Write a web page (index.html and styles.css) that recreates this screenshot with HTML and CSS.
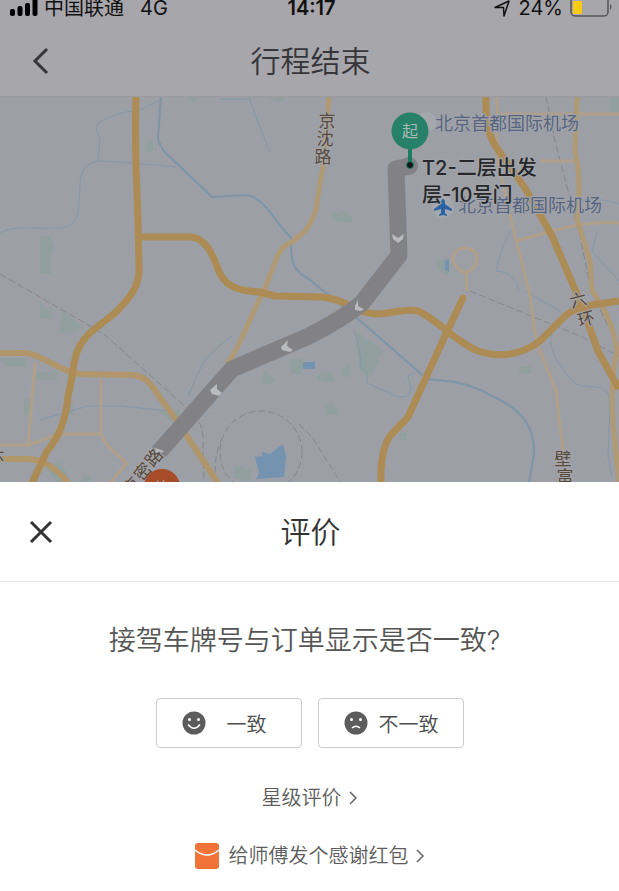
FILE: index.html
```html
<!DOCTYPE html>
<html lang="zh-CN">
<head>
    <meta charset="UTF-8">
    <meta name="viewport" content="width=device-width, initial-scale=1.0">
    <title>行程结束</title>
    <link rel="stylesheet" href="styles.css">
</head>
<body>
    <!-- 顶部 -->
    <header class="top">
        <div class="status">
            <div class="status-left">
                <svg class="signal" width="28" height="18" viewBox="0 0 28 18">
                    <rect x="0" y="10" width="5" height="7" rx="2" />
                    <rect x="7.500" y="7" width="5" height="10" rx="2" />
                    <rect x="15" y="4" width="5" height="13" rx="2" />
                    <rect x="22.500" y="-2" width="5" height="19" rx="2" />
                </svg>
                <span>中国联通</span>
                <span class="network">4G</span>
            </div>
            <span class="time">14:17</span>
            <div class="status-right">
                <svg width="18" height="18" viewBox="0 0 18 18">
                    <path d="M1 8.500 L15 2 L10 17 L9.500 8.500 Z" fill="none" stroke="#111" stroke-width="1.500" stroke-linejoin="round" />
                </svg>
                <span>24%</span>
                <svg class="battery" width="43" height="20" viewBox="0 0 43 20">
                    <rect x="1" y="-2" width="37" height="20" rx="4" fill="none" stroke="#55545a" stroke-width="1.500" />
                    <rect x="3" y="3" width="9" height="13" rx="1" fill="#f8cb12" />
                    <path d="M40 6 Q43 9 40 12 Z" fill="#55545a" />
                </svg>
            </div>
        </div>
        <div class="nav">
            <button class="icon-button" aria-label="返回">
                <svg width="24" height="28" viewBox="0 0 24 28">
                    <path d="M18 2 L6 14 L18 26" fill="none" stroke="#35353a" stroke-width="3" />
                </svg>
            </button>
            <h1>行程结束</h1>
        </div>
    </header>

    <!-- 地图 -->
    <svg class="map" viewBox="0 96 619 386" preserveAspectRatio="xMidYMin slice">
        <g class="green">
            <path d="M40 235 h10 l4 12 l-3 8 v18 h-11 z" />
            <path d="M146 142 l7 -4 v12 l-8 2 z" />
            <path d="M40 300 l12 12 v6 h-12 z M62 310 l19 14 l-3 6 l-19 3 z" />
            <path d="M0 357 h26 v9 h-20 z M36 371 l21 -1 v9 h-22 z M24 398 h6 v16 h-6 z M68 401 h5 v13 h-6 z" />
            <path d="M45 465 l16 -4 l10 20 h-14 z M82 474 h8 v8 h-8 z M160 410 l20 -1 v12 h-8 z" />
            <path d="M354 329 l29 20 l-12 27 l-11 -6 z" />
            <path d="M317 374 l7 -3 l10 2 v9 l-16 -2 z M342 368 l8 -5 v13 l-10 -1 z M325 405 l8 -3 l6 12 h-13 z" />
            <path d="M519 367 l12 -3 v9 h-12 z M399 433 l8 -3 v9 h-8 z" />
            <path d="M332 213 l12 -3 l8 5 v7 h-14 z M436 262 l13 -6 v18 l-11 -5 z" />
            <path d="M264 368 l10 10 l-3 5 h-9 z M290 358 h13 v15 h-12 z M234 463 l17 6 v12 l-17 -4 z" />
            <path d="M610 96 h9 v15 h-9 z M188 96 h12 l-6 6 z M268 96 h18 l-8 6 z" />
        </g>
        <path class="lake" d="M255 456 l7 -1 v-4 l8 2 l13 -10 l3 13 l-2 20 l-28 2 l3 -6 z M303 361 h12 v7 h-12 z M445 260 l4 -2 v13 l-4 -2 z" />

        <g class="river">
            <path d="M0 232 C15 224 25 228 62 227 C82 223 78 205 80 185 C80 170 86 162 98 160 L135 162 L176 166" />
            <path d="M98 160 L100 138 L96 127 Q96 121 110 116 L125 111 L138 110 L160 99" />
            <path d="M220 98 h28 M249 96 l8 23 l13 32" />
            <path d="M188 395 L202 364 Q206 355 232 335" />
            <path d="M355 330 L361 358 L360 366 L367 370 L367 382 L396 395 Q409 399 411 388 L408 375 L415 372" />
            <path d="M525 290 L560 310 M552 330 C547 350 558 363 575 383 C595 389 610 380 610 405 L608 455 L612 475" />
            <path d="M510 230 L502 248 L496 270 Q515 270 519 290" />
            <path d="M575 200 Q600 196 619 203 M597 230 L592 250 L619 280" />
            <path d="M40 419 L88 405 L120 405 L170 410" />
        </g>
        <g class="river wide">
            <path d="M161 96 L158 138 Q162 150 170 156 L212 196 L248 194 C265 198 273 218 291 237 C291 258 290 268 310 279 L350 311 L427 378 L455 381 Q475 385 490 394 C515 405 535 420 534 452 L529 482" />
        </g>

        <!-- 铁路 -->
        <g class="rail">
            <path d="M0 273 L85 322 L105 334 L188 408 Q205 420 203 445 L204 482" />
            <path d="M470 290 L580 335 L619 355 M546 96 L555 140 L580 235 L591 290 L608 325" />
            <circle cx="261" cy="451" r="41" />
            <path d="M216 482 Q213 455 222 438 M299 423 L312 436 L341 482" />
        </g>

        <!-- 支路 -->
        <g class="road-small">
            <path d="M35 362 L28 446 M101 378 V433 Q104 444 127 462 L110 482" />
            <path d="M0 444 H28 L60 433 H101" />
            <path d="M497 96 V160 L516 238 L529 290 L537 343 L556 390 L563 450" />
            <path d="M500 113 H619 M540 160 H575 M516 240 L560 228 Q590 220 619 222" />
            <path d="M467 290 L466 272 Q453 267 453 257 A12 10 0 0 1 477 257 Q477 267 466 272" />
        </g>
        <g class="road-light">
            <path d="M329 96 L324 158 L316 208 Q312 221 305 230 L293 240 Q281 246 278 254 L265 287 L260 297 L237 347 L227 363" />
            <path d="M577 96 L575 150 Q582 180 577 218 L590 260 L592 290 Q613 318 617 350 Q610 380 613 420 L619 482" />
        </g>
        <g class="road-mid">
            <path d="M0 352 H25 C42 353 60 371 80 373 L133 374 Q144 375 151 384 L177 420 L218 482" />
            <path d="M0 458 H30 Q52 461 68 482" />
        </g>
        <g class="road">
            <path d="M136 96 Q135 120 136 165 L138 220 L139 266 C140 285 130 297 115 312 L92 330 C70 350 76 365 68 395 Q65 430 47 450 L32 482" />
            <path d="M142 236 H190 C205 236 212 252 218 268 C224 284 235 290 260 291 L275 295 L322 296 Q338 298 350 305 Q364 313 379 313 C394 312 406 307 418 310 C440 320 452 339 478 350 C500 357 520 355 540 340 L565 315 Q576 306 592 304 L619 300" />
            <path d="M463 297 L445 335 L408 416 L390 435 Q380 450 381 482" stroke-linecap="round" />
            <path d="M486 96 Q485 130 496 146 L525 187 L552 235 L580 300 L598 350 L619 388" />
        </g>

        <!-- 行程路线 -->
        <path class="route" d="M409 165 L396 168 L399 254 L362 302 Q344 317 309 335 L232 368 L158 452" />
        <circle cx="409" cy="165" r="9" fill="#828286" />
        <g class="arrow">
            <path d="M392 233 l6 4 l6 -4 l-1 5 l-5 4 l-5 -4 z" />
            <path d="M355 305 l3 -6 v6 l6 3 l-3 2 l-6 -1 z" />
            <path d="M281 346 l7 -7 l-1 6 l6 4 l-3 2 l-8 -2 z" />
            <path d="M210 389 l7 -6 v5 l5 4 l-3 3 l-7 -2 z" />
            <path d="M155 447 l9 3 l-7 5 z" />
        </g>

        <g class="road-label">
            <text x="327" y="126">京</text>
            <text x="325" y="144">沈</text>
            <text x="323" y="162">路</text>
            <text x="578" y="305" transform="rotate(-15 578 298)">六</text>
            <text x="586" y="324" transform="rotate(-15 586 317)">环</text>
            <text x="563" y="464">壁</text>
            <text x="565" y="482">富</text>
            <text x="-4" y="464">环</text>
            <text x="153" y="463" transform="rotate(-50 153 456)">路</text>
            <text x="142" y="477" transform="rotate(-50 142 470)">密</text>
            <text x="131" y="491" transform="rotate(-50 131 484)">京</text>
        </g>
        <g class="place">
            <circle cx="427" cy="121" r="10" />
            <circle cx="443" cy="206" r="11" />
            <path d="M443 198 q2 0 2 5 l7 5 v2 l-7 -2 v4 l2 2 v1 l-4 -1 l-4 1 v-1 l2 -2 v-4 l-7 2 v-2 l7 -5 q0 -5 2 -5 z" />
            <text x="435" y="129">北京首都国际机场</text>
            <text x="458" y="211">北京首都国际机场</text>
        </g>

        <!-- 起点 -->
        <path d="M410 145 V163" stroke="#1c7d63" stroke-width="4" />
        <circle cx="410" cy="130" r="18.500" fill="#27816a" />
        <circle cx="410" cy="164" r="3.500" fill="#13191b" stroke="#1c7d63" />
        <text class="pin-text" x="410" y="136">起</text>
        <g class="start-name">
            <text x="422" y="174">T2-二层出发</text>
            <text x="422" y="201">层-10号门</text>
        </g>

        <!-- 终点 -->
        <circle cx="162" cy="486" r="18" fill="#a64c28" />
        <text class="pin-text" x="162" y="493">终</text>
    </svg>

    <!-- 评价 -->
    <section class="sheet">
        <div class="sheet-header">
            <button class="icon-button" aria-label="关闭">
                <svg width="24" height="24" viewBox="0 0 24 24">
                    <path d="M2 2 L22 22 M22 2 L2 22" fill="none" stroke="#333" stroke-width="3" />
                </svg>
            </button>
            <h2>评价</h2>
        </div>
        <div class="sheet-body">
            <p class="question">接驾车牌号与订单显示是否一致?</p>
            <div class="choices">
                <button class="choice">
                    <svg width="24" height="24" viewBox="0 0 24 24">
                        <circle cx="12" cy="12" r="11.500" fill="#5c5c5c" />
                        <circle cx="7.500" cy="8.500" r="1.500" fill="#fff" />
                        <circle cx="16.500" cy="8.500" r="1.500" fill="#fff" />
                        <path d="M6 13.500 Q12 21 18 13.500" fill="none" stroke="#fff" stroke-width="1.500" />
                    </svg>
                    <span>一致</span>
                </button>
                <button class="choice">
                    <svg width="24" height="24" viewBox="0 0 24 24">
                        <circle cx="12" cy="12" r="11.500" fill="#5c5c5c" />
                        <circle cx="7.500" cy="8.500" r="1.500" fill="#fff" />
                        <circle cx="16.500" cy="8.500" r="1.500" fill="#fff" />
                        <path d="M8 17 Q12 13.500 16 17" fill="none" stroke="#fff" stroke-width="1.500" />
                    </svg>
                    <span>不一致</span>
                </button>
            </div>
            <a class="link" href="#">
                <span>星级评价</span>
                <svg width="10" height="14" viewBox="0 0 10 14">
                    <path d="M2 1 L8 7 L2 13" fill="none" stroke="#666" stroke-width="1.500" />
                </svg>
            </a>
            <a class="link" href="#">
                <svg class="packet" width="24" height="26" viewBox="0 0 24 26">
                    <rect width="24" height="26" rx="3" fill="#f27338" />
                    <path d="M0 7 Q12 17 24 7" fill="none" stroke="#fff" stroke-width="1.500" />
                </svg>
                <span>给师傅发个感谢红包</span>
                <svg width="10" height="14" viewBox="0 0 10 14">
                    <path d="M2 1 L8 7 L2 13" fill="none" stroke="#666" stroke-width="1.500" />
                </svg>
            </a>
        </div>
    </section>
</body>
</html>
```
FILE: styles.css
```css
* {
    box-sizing: border-box;
}

body {
    margin: 0;
    height: 100vh;
    display: flex;
    flex-direction: column;
    font-family: Inter, "Noto Sans CJK SC", sans-serif;
    font-weight: 350;
    background-color: #fff;
}

h1,
h2,
p {
    margin: 0;
    font-weight: 350;
}

button {
    font-family: inherit;
    cursor: pointer;
}

svg {
    flex-shrink: 0;
}

/* 顶部 */
.top {
    background-color: #a7a6ab;
    border-bottom: 1px solid #9a9a9f;
}

.status {
    display: grid;
    grid-template-columns: 1fr auto 1fr;
    align-items: center;
    height: 12px;
    padding: 0 6px 0 10px;
    font-size: 20px;
    font-weight: 400;
    line-height: 16px;
    color: #111;
}

.status-left,
.status-right {
    display: flex;
    align-items: center;
    gap: 6px;
    height: 12px;
}

.status-right {
    justify-content: flex-end;
    gap: 7px;
}

.network {
    margin-left: 10px;
}

.time {
    font-weight: 600;
}

.nav,
.sheet-header {
    display: grid;
    grid-template-columns: 82px 1fr 80px;
    align-items: center;
    text-align: center;
}

.nav {
    height: 84px;
    padding-top: 14px;
    color: #35353a;
}

h1,
h2 {
    font-size: 30px;
    line-height: 40px;
}

.icon-button {
    display: flex;
    justify-content: center;
    padding: 8px;
    border: none;
    background: none;
}

/* 地图 */
.map {
    display: block;
    flex: 1 1 0;
    width: 100%;
    min-height: 0;
    font-weight: 400;
    background-color: #9c9fa5;
}

.map path,
.map circle {
    stroke-linejoin: round;
}

.green {
    fill: #91a09f;
}

.lake {
    fill: #7393b0;
}

.river {
    fill: none;
    stroke: #8497aa;
    stroke-width: 1;
}

.wide {
    stroke: #7c95a7;
    stroke-width: 2;
}

.rail {
    fill: none;
    stroke: #85878c;
    stroke-width: 1;
    stroke-dasharray: 7 3;
}

.road-small {
    fill: none;
    stroke: #b1a089;
    stroke-width: 3;
}

.road-light {
    fill: none;
    stroke: #b09a75;
    stroke-width: 5;
}

.road-mid {
    fill: none;
    stroke: #b0966a;
    stroke-width: 6;
}

.road {
    fill: none;
    stroke: #ad8b54;
    stroke-width: 7;
}

.route {
    fill: none;
    stroke: #828286;
    stroke-width: 17;
}

.arrow {
    fill: #b9babd;
}

.road-label {
    font-size: 17px;
    fill: #55493d;
    stroke: #a5a5a8;
    stroke-width: 2;
    paint-order: stroke;
    text-anchor: middle;
}

.place circle {
    fill: #a5a7ae;
}

.place path {
    fill: #2c63a3;
}

.place text {
    font-size: 18px;
    fill: #56657f;
    stroke: #a2a4aa;
    stroke-width: 2;
    paint-order: stroke;
}

.pin-text {
    font-size: 16px;
    fill: #a9b9b7;
    text-anchor: middle;
}

.start-name {
    font-size: 20px;
    font-weight: 500;
    fill: #25272b;
    stroke: #a2a4aa;
    stroke-width: 2;
    paint-order: stroke;
}

/* 评价 */
.sheet {
    background-color: #fff;
    color: #555;
}

.sheet-header {
    height: 100px;
    border-bottom: 1px solid #e5e5e5;
    color: #333;
}

.sheet-body {
    display: flex;
    flex-direction: column;
    align-items: center;
    padding: 38px 16px 20px;
}

.question {
    padding-right: 10px;
    font-size: 27px;
    line-height: 42px;
    text-align: center;
}

.choices {
    display: flex;
    gap: 16px;
    margin: 36px 0 35px;
}

.choice {
    display: flex;
    align-items: center;
    gap: 11px;
    width: 146px;
    height: 50px;
    padding: 0 24px 0 25px;
    border: 1px solid #ccc;
    border-radius: 4px;
    background-color: #fff;
    font-size: 20px;
    font-weight: 350;
    color: #4c4c4c;
}

.choice span {
    flex: 1;
    white-space: nowrap;
}

.link {
    display: flex;
    align-items: center;
    gap: 6px;
    font-size: 20px;
    line-height: 30px;
    color: #5c5c5c;
    text-decoration: none;
}

.link + .link {
    margin-top: 28px;
}

.packet {
    margin-right: 4px;
}
```
